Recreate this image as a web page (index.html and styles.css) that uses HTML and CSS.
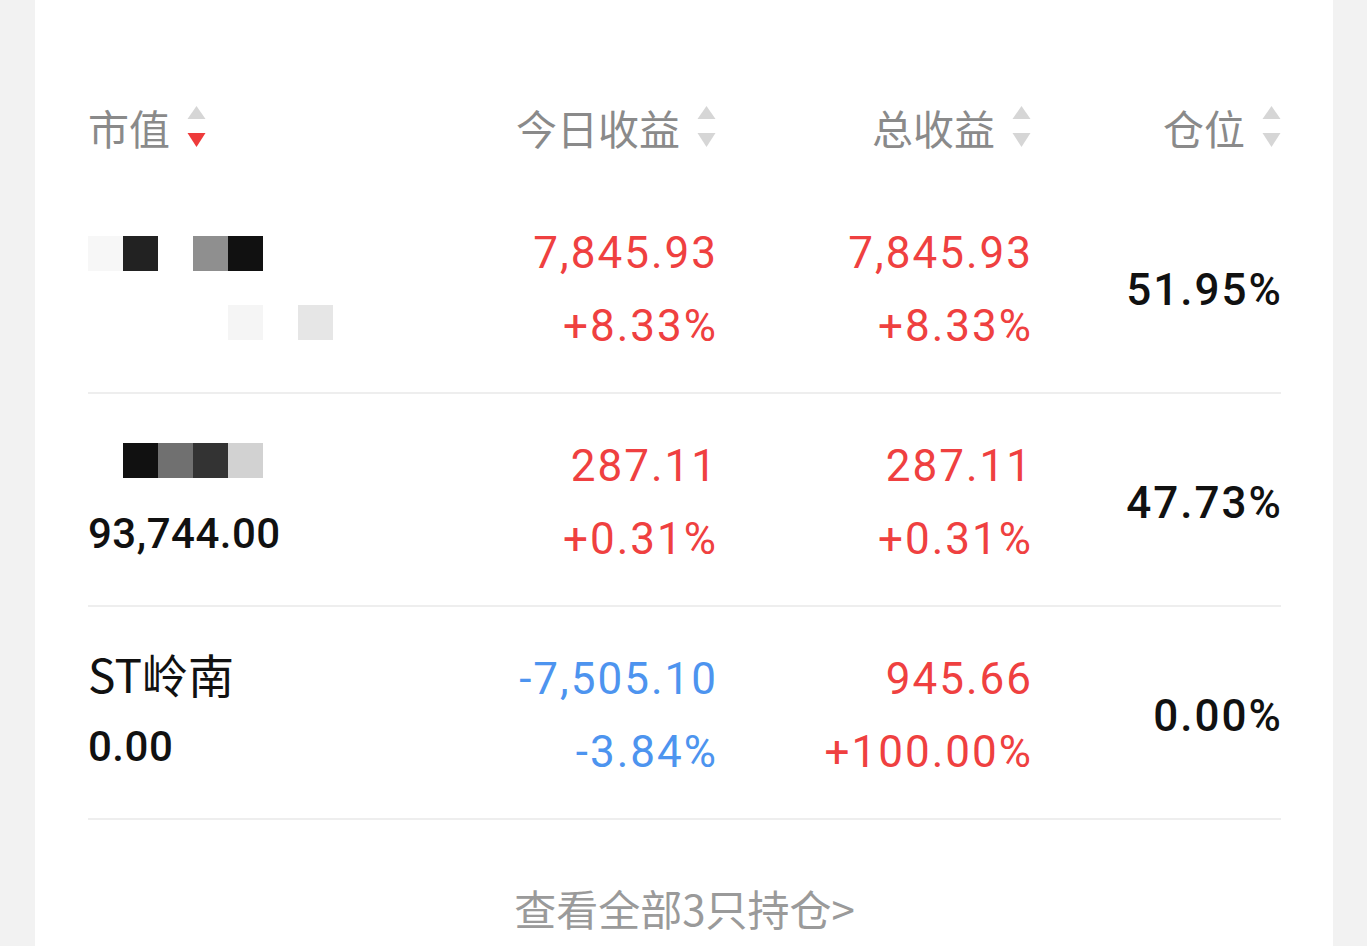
FILE: index.html
```html
<!DOCTYPE html>
<html lang="zh-CN">
<head>
<meta charset="utf-8">
<title>持仓</title>
<link rel="stylesheet" href="styles.css">
</head>
<body>
<div class="card">
  <div class="table">
    <div class="thead">
      <div class="th th-left"><span>市值</span>
        <svg class="sort" viewBox="0 0 19 44" width="19" height="44"><polygon points="9.5,1 18.5,14 0.5,14" fill="#d6d6d6"/><polygon points="0.5,28 18.5,28 9.5,42" fill="#ee3b3b"/></svg>
      </div>
      <div class="th"><span>今日收益</span>
        <svg class="sort" viewBox="0 0 19 44" width="19" height="44"><polygon points="9.5,1 18.5,14 0.5,14" fill="#d6d6d6"/><polygon points="0.5,28 18.5,28 9.5,42" fill="#d6d6d6"/></svg>
      </div>
      <div class="th"><span>总收益</span>
        <svg class="sort" viewBox="0 0 19 44" width="19" height="44"><polygon points="9.5,1 18.5,14 0.5,14" fill="#d6d6d6"/><polygon points="0.5,28 18.5,28 9.5,42" fill="#d6d6d6"/></svg>
      </div>
      <div class="th"><span>仓位</span>
        <svg class="sort" viewBox="0 0 19 44" width="19" height="44"><polygon points="9.5,1 18.5,14 0.5,14" fill="#d6d6d6"/><polygon points="0.5,28 18.5,28 9.5,42" fill="#d6d6d6"/></svg>
      </div>
    </div>

    <div class="row">
      <div class="cell-left">
        <div class="line"><span class="pix"><i class="p-f7"></i><i class="p-22"></i><i class="p-ff"></i><i class="p-8f"></i><i class="p-11"></i></span></div>
        <div class="line line-pix2"><span class="pix pix-off"><i class="p-f5"></i><i class="p-ff"></i><i class="p-e6"></i></span></div>
      </div>
      <div class="cell num red"><div class="line">7,845.93</div><div class="line">+8.33%</div></div>
      <div class="cell num red"><div class="line">7,845.93</div><div class="line">+8.33%</div></div>
      <div class="cell pos">51.95%</div>
    </div>

    <div class="row">
      <div class="cell-left shift">
        <div class="line"><span class="pix pix-in"><i class="p-11"></i><i class="p-70"></i><i class="p-33"></i><i class="p-d2"></i></span></div>
        <div class="line num-dark">93,744.00</div>
      </div>
      <div class="cell num red"><div class="line">287.11</div><div class="line">+0.31%</div></div>
      <div class="cell num red"><div class="line">287.11</div><div class="line">+0.31%</div></div>
      <div class="cell pos">47.73%</div>
    </div>

    <div class="row">
      <div class="cell-left shift">
        <div class="line name">ST岭南</div>
        <div class="line num-dark">0.00</div>
      </div>
      <div class="cell num blue"><div class="line">-7,505.10</div><div class="line">-3.84%</div></div>
      <div class="cell num red"><div class="line">945.66</div><div class="line">+100.00%</div></div>
      <div class="cell pos">0.00%</div>
    </div>
  </div>

  <div class="more">查看全部3只持仓&gt;</div>
</div>
</body>
</html>
```

FILE: styles.css
```css
html, body {
  margin: 0;
  padding: 0;
  background: #f2f2f2;
  height: 100%;
  overflow: hidden;
}

body {
  font-family: "Noto Sans CJK SC", "Noto Sans", sans-serif;
}

.card {
  margin-left: 35px;
  width: 1298px;
  min-height: 1000px;
  background: #ffffff;
  box-sizing: border-box;
  padding: 88px 52px 0 53px;
}

.table {
  display: flex;
  flex-direction: column;
}

.thead,
.row {
  display: grid;
  grid-template-columns: 312px 316px 315px 250px;
}

.thead {
  height: 78px;
  margin-bottom: 15px;
  align-items: center;
}

.th {
  display: flex;
  align-items: center;
  justify-content: flex-end;
  gap: 17px;
  font-size: 41px;
  color: #8a8a8a;
  line-height: 1;
}

.th-left {
  justify-content: flex-start;
}

.sort {
  display: block;
  flex: none;
}

.row {
  box-sizing: border-box;
  height: 213px;
  padding-top: 36px;
  border-bottom: 2px solid #eeeeee;
}

.line {
  height: 73px;
  line-height: 73px;
  white-space: nowrap;
}

.cell {
  text-align: right;
}

.num {
  font-family: Roboto, "Liberation Sans", sans-serif;
  font-size: 44px;
  letter-spacing: 2px;
  margin-right: -2px;
}

.red { color: #ef4040; }
.blue { color: #4d94ef; }

.pos {
  font-family: Roboto, "Liberation Sans", sans-serif;
  font-size: 44px;
  letter-spacing: 2px;
  margin-right: -2px;
  color: #111111;
  height: 146px;
  line-height: 146px;
  font-weight: 500;
}

.cell-left {
  color: #111111;
}

.shift {
  margin-top: -6px;
}

.name {
  font-size: 46px;
}

.num-dark {
  font-family: Roboto, "Liberation Sans", sans-serif;
  font-size: 42px;
  font-weight: 500;
  letter-spacing: 0.5px;
}

.pix {
  display: inline-flex;
  vertical-align: middle;
  margin-top: -4px;
}

.pix-in {
  margin-left: 35px;
}

.pix-off {
  margin-left: 140px;
}

.line-pix2 .pix {
  margin-top: -12px;
}

.pix i {
  display: block;
  width: 35px;
  height: 35px;
}

.p-f7 { background: #f7f7f7; }
.p-f5 { background: #f5f5f5; }
.p-ff { background: #ffffff; }
.p-e6 { background: #e6e6e6; }
.p-d2 { background: #d2d2d2; }
.p-8f { background: #8f8f8f; }
.p-70 { background: #707070; }
.p-33 { background: #333333; }
.p-22 { background: #222222; }
.p-11 { background: #111111; }

.more {
  text-align: center;
  font-size: 42px;
  color: #9a9a9a;
  padding-top: 60px;
  line-height: 56px;
}
```
